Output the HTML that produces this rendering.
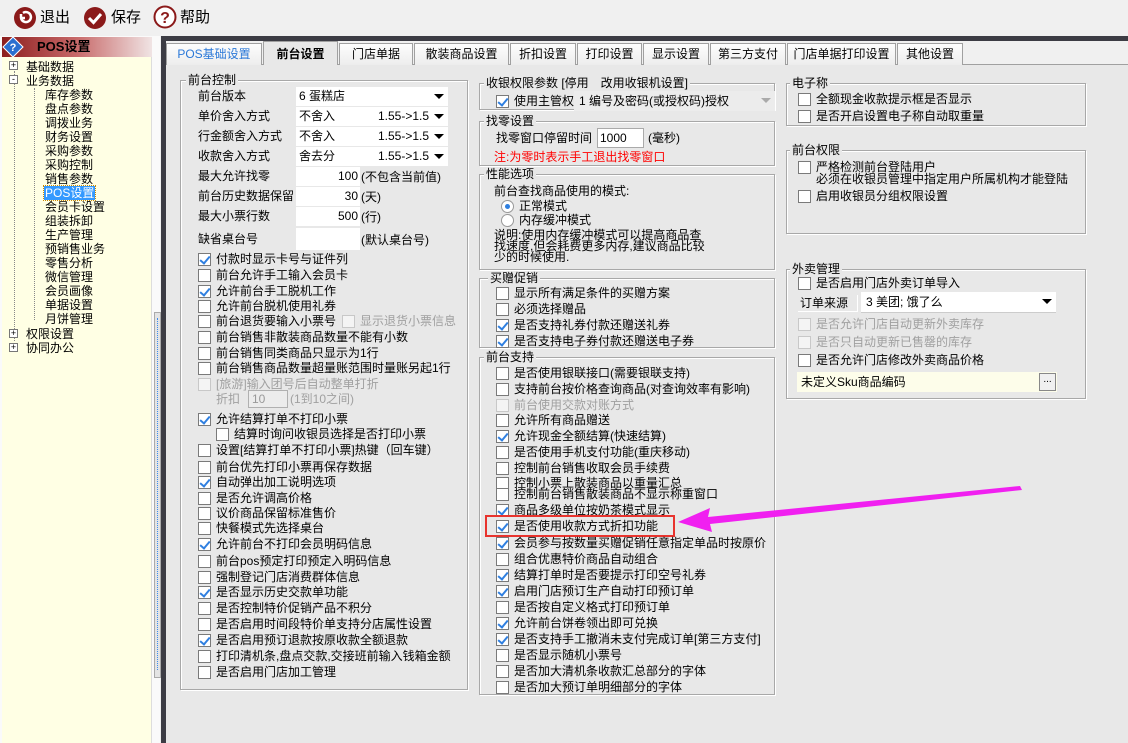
<!DOCTYPE html>
<html><head><meta charset="utf-8"><style>
*{margin:0;padding:0;box-sizing:border-box}
body{width:1128px;height:743px;overflow:hidden;background:#f0f0f0;position:relative;font:12px/14px "Liberation Sans","Noto Sans CJK SC",sans-serif;color:#000}
div,span{position:absolute;white-space:nowrap}
.r{display:flex;align-items:center;height:14px}
.c{display:inline-block;width:13px;height:13px;border:1px solid #7a7a7a;background:#fff;margin-right:5px;position:relative;flex:none}
.k::after{content:"";position:absolute;left:3px;top:0px;width:4px;height:8px;border-right:2px solid #2f7fe0;border-bottom:2px solid #2f7fe0;transform:rotate(40deg)}
.g{color:#a0a0a0}.g .c{border-color:#c8c8c8;background:#f4f4f4}
.grp{border:1px solid #a8a8a8;box-shadow:inset 1px 1px #fff,1px 1px #fff}
.lg{background:#e8e8e8;padding:0 2px;line-height:14px}
.tab{top:43px;height:22px;background:linear-gradient(#fdfdfd,#ededed);border:1px solid #a0a0a0;border-bottom:none;text-align:center;line-height:20px;font-size:12px}
.fl{left:196px;width:97px;height:19px;line-height:19px;padding-left:2px}
.fv{left:296px;width:152px;height:19px;background:#fff;line-height:19px;padding-left:3px}
.ar{position:absolute;right:4px;top:7px;border-left:5px solid transparent;border-right:5px solid transparent;border-top:5px solid #000}
</style></head><body>
<svg style="position:absolute;left:13px;top:6px" width="24" height="24"><circle cx="12" cy="12" r="11" fill="#8b1a1a"/><path d="M8 8 L8 12 M7 12 L12 12 M8 12 A5 5 0 1 0 10 7" stroke="#fff" stroke-width="2.5" fill="none"/></svg>
<div style="left:40px;top:9px;font-size:15px;line-height:18px">退出</div>
<svg style="position:absolute;left:83px;top:6px" width="24" height="24"><circle cx="12" cy="12" r="11" fill="#8b1a1a"/><path d="M6 12 L10.5 16.5 L18 8" stroke="#fff" stroke-width="3" fill="none"/></svg>
<div style="left:111px;top:9px;font-size:15px;line-height:18px">保存</div>
<svg style="position:absolute;left:153px;top:5px" width="24" height="26"><circle cx="12" cy="12" r="10.5" fill="#fff" stroke="#8b1a1a" stroke-width="2"/><text x="12" y="18" text-anchor="middle" font-size="16" font-weight="bold" fill="#8b1a1a" font-family="Liberation Sans">?</text></svg>
<div style="left:180px;top:9px;font-size:15px;line-height:18px">帮助</div>
<div style="left:0;top:36px;width:160px;height:707px;background:#fafafa"></div>
<div style="left:2px;top:37px;width:150px;height:20px;background:linear-gradient(90deg,#8c1e1e,#c86a6a 50%,#f0e4e4)"></div>
<svg style="position:absolute;left:2px;top:36px" width="22" height="22"><path d="M11 1 L21 11 L11 21 L1 11Z" fill="#2a6fd0" stroke="#fff"/><text x="11" y="15" text-anchor="middle" font-size="11" fill="#fff" font-weight="bold">?</text></svg>
<div style="left:37px;top:40px;font-weight:bold;font-size:13px">POS设置</div>
<div style="left:2px;top:57px;width:150px;height:686px;background:#ffffe4;border-right:1px solid #ddd"></div>
<div style="left:14px;top:71px;height:270px;border-left:1px dotted #888"></div>
<div style="left:34px;top:88px;height:232px;border-left:1px dotted #888"></div>
<div style="left:9px;top:61px;width:9px;height:9px;border:1px solid #777;background:#fff;font-size:9px;line-height:7px;text-align:center">+</div>
<div style="left:26px;top:60px">基础数据</div>
<div style="left:9px;top:75px;width:9px;height:9px;border:1px solid #777;background:#fff;font-size:9px;line-height:6px;text-align:center">-</div>
<div style="left:26px;top:74px">业务数据</div>
<div style="left:45px;top:88px">库存参数</div><div style="left:45px;top:102px">盘点参数</div><div style="left:45px;top:116px">调拨业务</div><div style="left:45px;top:130px">财务设置</div><div style="left:45px;top:144px">采购参数</div><div style="left:45px;top:158px">采购控制</div><div style="left:45px;top:172px">销售参数</div>
<div style="left:44px;top:186px;background:#3399ff;color:#fff;outline:1px dotted #c80;padding:0 1px">POS设置</div>
<div style="left:45px;top:200px">会员卡设置</div><div style="left:45px;top:214px">组装拆卸</div><div style="left:45px;top:228px">生产管理</div><div style="left:45px;top:242px">预销售业务</div><div style="left:45px;top:256px">零售分析</div><div style="left:45px;top:270px">微信管理</div><div style="left:45px;top:284px">会员画像</div><div style="left:45px;top:298px">单据设置</div><div style="left:45px;top:312px">月饼管理</div>
<div style="left:9px;top:329px;width:9px;height:9px;border:1px solid #777;background:#fff;font-size:9px;line-height:7px;text-align:center">+</div>
<div style="left:26px;top:327px">权限设置</div>
<div style="left:9px;top:343px;width:9px;height:9px;border:1px solid #777;background:#fff;font-size:9px;line-height:7px;text-align:center">+</div>
<div style="left:26px;top:341px">协同办公</div>
<div style="left:154px;top:312px;width:7px;height:366px;background:#e4e4e4;border:1px solid #aaa"></div>
<div style="left:157px;top:318px;height:352px;border-left:1px dotted #3b8cf0"></div>
<div style="left:161px;top:36px;width:967px;height:707px;background:#3c3c44"></div>
<div style="left:166px;top:41px;width:962px;height:702px;background:#f0f0f0"></div>
<div style="left:166px;top:64px;width:962px;height:679px;background:#e8e8e8;border-top:1px solid #a0a0a0"></div>
<div class="tab" style="left:166px;width:96px;color:#2a78d8">POS基础设置</div>
<div class="tab" style="left:263px;width:75px;top:41px;height:24px;background:#e8e8e8;font-weight:bold;line-height:24px">前台设置</div>
<div class="tab" style="left:339px;width:74px">门店单据</div>
<div class="tab" style="left:414px;width:95px">散装商品设置</div>
<div class="tab" style="left:510px;width:66px">折扣设置</div>
<div class="tab" style="left:577px;width:65px">打印设置</div>
<div class="tab" style="left:643px;width:66px">显示设置</div>
<div class="tab" style="left:710px;width:76px">第三方支付</div>
<div class="tab" style="left:787px;width:109px">门店单据打印设置</div>
<div class="tab" style="left:897px;width:66px">其他设置</div>
<div class="grp" style="left:180px;top:80px;width:288px;height:610px"></div>
<div class="lg" style="left:186px;top:73px">前台控制</div>
<div class="fl" style="top:87px">前台版本</div><div class="fv" style="top:87px">6 蛋糕店<i class="ar"></i></div>
<div class="fl" style="top:107px">单价舍入方式</div><div class="fv" style="top:107px">不舍入<span style="left:82px">1.55-&gt;1.5</span><i class="ar"></i></div>
<div class="fl" style="top:127px">行金额舍入方式</div><div class="fv" style="top:127px">不舍入<span style="left:82px">1.55-&gt;1.5</span><i class="ar"></i></div>
<div class="fl" style="top:147px">收款舍入方式</div><div class="fv" style="top:147px">舍去分<span style="left:82px">1.55-&gt;1.5</span><i class="ar"></i></div>
<div class="fl" style="top:167px">最大允许找零</div><div class="fv" style="top:167px;width:64px;text-align:right;padding-right:2px">100</div><div style="left:361px;top:170px">(不包含当前值)</div>
<div class="fl" style="top:187px">前台历史数据保留</div><div class="fv" style="top:187px;width:64px;text-align:right;padding-right:2px">30</div><div style="left:361px;top:190px">(天)</div>
<div class="fl" style="top:207px">最大小票行数</div><div class="fv" style="top:207px;width:64px;text-align:right;padding-right:2px">500</div><div style="left:361px;top:210px">(行)</div>
<div class="fl" style="top:228px;height:22px;line-height:22px">缺省桌台号</div><div class="fv" style="top:228px;width:64px;height:22px"></div><div style="left:361px;top:233px">(默认桌台号)</div>
<div class="r" style="left:198px;top:252px"><i class="c k"></i>付款时显示卡号与证件列</div>
<div class="r" style="left:198px;top:268px"><i class="c"></i>前台允许手工输入会员卡</div>
<div class="r" style="left:198px;top:284px"><i class="c k"></i>允许前台手工脱机工作</div>
<div class="r" style="left:198px;top:299px"><i class="c"></i>允许前台脱机使用礼券</div>
<div class="r" style="left:198px;top:314px"><i class="c"></i>前台退货要输入小票号</div>
<div class="r g" style="left:342px;top:314px"><i class="c"></i>显示退货小票信息</div>
<div class="r" style="left:198px;top:330px"><i class="c"></i>前台销售非散装商品数量不能有小数</div>
<div class="r" style="left:198px;top:346px"><i class="c"></i>前台销售同类商品只显示为1行</div>
<div class="r" style="left:198px;top:361px"><i class="c"></i>前台销售商品数量超量账范围时量账另起1行</div>
<div class="r g" style="left:198px;top:377px"><i class="c"></i>[旅游]输入团号后自动整单打折</div>
<div class="g" style="left:216px;top:392px">折扣</div>
<div style="left:248px;top:390px;width:40px;height:18px;border:1px solid #b0b0b0;background:#ececec;color:#999;padding-left:3px;line-height:16px">10</div>
<div class="g" style="left:290px;top:392px">(1到10之间)</div>
<div class="r" style="left:198px;top:412px"><i class="c k"></i>允许结算打单不打印小票</div>
<div class="r" style="left:216px;top:427px"><i class="c"></i>结算时询问收银员选择是否打印小票</div>
<div class="r" style="left:198px;top:443px"><i class="c"></i>设置[结算打单不打印小票]热键（回车键）</div>
<div class="r" style="left:198px;top:460px"><i class="c"></i>前台优先打印小票再保存数据</div>
<div class="r" style="left:198px;top:475px"><i class="c k"></i>自动弹出加工说明选项</div>
<div class="r" style="left:198px;top:491px"><i class="c"></i>是否允许调高价格</div>
<div class="r" style="left:198px;top:506px"><i class="c"></i>议价商品保留标准售价</div>
<div class="r" style="left:198px;top:521px"><i class="c"></i>快餐模式先选择桌台</div>
<div class="r" style="left:198px;top:537px"><i class="c k"></i>允许前台不打印会员明码信息</div>
<div class="r" style="left:198px;top:554px"><i class="c"></i>前台pos预定打印预定入明码信息</div>
<div class="r" style="left:198px;top:570px"><i class="c"></i>强制登记门店消费群体信息</div>
<div class="r" style="left:198px;top:585px"><i class="c k"></i>是否显示历史交款单功能</div>
<div class="r" style="left:198px;top:601px"><i class="c"></i>是否控制特价促销产品不积分</div>
<div class="r" style="left:198px;top:617px"><i class="c"></i>是否启用时间段特价单支持分店属性设置</div>
<div class="r" style="left:198px;top:633px"><i class="c k"></i>是否启用预订退款按原收款全额退款</div>
<div class="r" style="left:198px;top:649px"><i class="c"></i>打印清机条,盘点交款,交接班前输入钱箱金额</div>
<div class="r" style="left:198px;top:665px"><i class="c"></i>是否启用门店加工管理</div>
<div class="grp" style="left:479px;top:83px;width:296px;height:27px"></div>
<div class="lg" style="left:484px;top:76px">收银权限参数 [停用　改用收银机设置]</div>
<div class="r" style="left:496px;top:94px"><i class="c k"></i>使用主管权限</div>
<div style="left:574px;top:91px;width:201px;height:20px;background:#ececec;padding-left:5px;line-height:20px">1 编号及密码(或授权码)授权<i class="ar" style="border-top-color:#aaa"></i></div>
<div class="grp" style="left:479px;top:121px;width:296px;height:45px"></div>
<div class="lg" style="left:484px;top:114px">找零设置</div>
<div style="left:496px;top:131px">找零窗口停留时间</div>
<div style="left:597px;top:128px;width:47px;height:20px;background:#fff;border:1px solid #aaa;line-height:18px;padding-left:2px">1000</div>
<div style="left:648px;top:131px">(毫秒)</div>
<div style="left:494px;top:150px;color:#f00">注:为零时表示手工退出找零窗口</div>
<div class="grp" style="left:479px;top:174px;width:296px;height:96px"></div>
<div class="lg" style="left:484px;top:167px">性能选项</div>
<div style="left:494px;top:184px">前台查找商品使用的模式:</div>
<div class="r" style="left:501px;top:199px"><i class="c" style="border-radius:50%;border-color:#999"><i style="position:absolute;left:3px;top:3px;width:5px;height:5px;border-radius:50%;background:#2f7fe0"></i></i>正常模式</div>
<div class="r" style="left:501px;top:213px"><i class="c" style="border-radius:50%;border-color:#999"></i>内存缓冲模式</div>
<div style="left:494px;top:230px;line-height:11px">说明:使用内存缓冲模式可以提高商品查<br>找速度,但会耗费更多内存,建议商品比较<br>少的时候使用.</div>
<div class="grp" style="left:479px;top:278px;width:296px;height:70px"></div>
<div class="lg" style="left:488px;top:271px">买赠促销</div>
<div class="r" style="left:496px;top:286px"><i class="c"></i>显示所有满足条件的买赠方案</div>
<div class="r" style="left:496px;top:302px"><i class="c"></i>必须选择赠品</div>
<div class="r" style="left:496px;top:318px"><i class="c k"></i>是否支持礼券付款还赠送礼券</div>
<div class="r" style="left:496px;top:334px"><i class="c k"></i>是否支持电子券付款还赠送电子券</div>
<div class="grp" style="left:479px;top:357px;width:296px;height:338px"></div>
<div class="lg" style="left:484px;top:350px">前台支持</div>
<div class="r" style="left:496px;top:366px"><i class="c"></i>是否使用银联接口(需要银联支持)</div>
<div class="r" style="left:496px;top:382px"><i class="c"></i>支持前台按价格查询商品(对查询效率有影响)</div>
<div class="r g" style="left:496px;top:398px"><i class="c"></i>前台使用交款对账方式</div>
<div class="r" style="left:496px;top:413px"><i class="c"></i>允许所有商品赠送</div>
<div class="r" style="left:496px;top:429px"><i class="c k"></i>允许现金全额结算(快速结算)</div>
<div class="r" style="left:496px;top:445px"><i class="c"></i>是否使用手机支付功能(重庆移动)</div>
<div class="r" style="left:496px;top:461px"><i class="c"></i>控制前台销售收取会员手续费</div>
<div class="r" style="left:496px;top:476px"><i class="c"></i>控制小票上散装商品以重量汇总</div>
<div class="r" style="left:496px;top:487px"><i class="c"></i>控制前台销售散装商品不显示称重窗口</div>
<div class="r" style="left:496px;top:503px"><i class="c k"></i>商品多级单位按奶茶模式显示</div>
<div class="r" style="left:496px;top:519px"><i class="c k"></i>是否使用收款方式折扣功能</div>
<div style="left:485px;top:515px;width:190px;height:22px;border:2px solid #e8342e"></div>
<div class="r" style="left:496px;top:536px"><i class="c k"></i>会员参与按数量买赠促销任意指定单品时按原价</div>
<div class="r" style="left:496px;top:552px"><i class="c"></i>组合优惠特价商品自动组合</div>
<div class="r" style="left:496px;top:568px"><i class="c k"></i>结算打单时是否要提示打印空号礼券</div>
<div class="r" style="left:496px;top:584px"><i class="c k"></i>启用门店预订生产自动打印预订单</div>
<div class="r" style="left:496px;top:600px"><i class="c"></i>是否按自定义格式打印预订单</div>
<div class="r" style="left:496px;top:616px"><i class="c k"></i>允许前台饼卷领出即可兑换</div>
<div class="r" style="left:496px;top:632px"><i class="c k"></i>是否支持手工撤消未支付完成订单[第三方支付]</div>
<div class="r" style="left:496px;top:648px"><i class="c"></i>是否显示随机小票号</div>
<div class="r" style="left:496px;top:664px"><i class="c"></i>是否加大清机条收款汇总部分的字体</div>
<div class="r" style="left:496px;top:680px"><i class="c"></i>是否加大预订单明细部分的字体</div>
<div class="grp" style="left:786px;top:83px;width:300px;height:43px"></div>
<div class="lg" style="left:790px;top:76px">电子称</div>
<div class="r" style="left:798px;top:92px"><i class="c"></i>全额现金收款提示框是否显示</div>
<div class="r" style="left:798px;top:109px"><i class="c"></i>是否开启设置电子称自动取重量</div>
<div class="grp" style="left:786px;top:150px;width:300px;height:84px"></div>
<div class="lg" style="left:790px;top:143px">前台权限</div>
<div class="r" style="left:798px;top:161px;align-items:flex-start;height:28px"><i class="c"></i><span style="position:static;line-height:12px">严格检测前台登陆用户<br>必须在收银员管理中指定用户所属机构才能登陆</span></div>
<div class="r" style="left:798px;top:189px"><i class="c"></i>启用收银员分组权限设置</div>
<div class="grp" style="left:786px;top:269px;width:300px;height:130px"></div>
<div class="lg" style="left:790px;top:262px">外卖管理</div>
<div class="r" style="left:798px;top:276px"><i class="c"></i>是否启用门店外卖订单导入</div>
<div style="left:798px;top:295px;width:60px;line-height:16px;padding-left:2px;border-bottom:1px solid #fff;border-right:1px solid #fff">订单来源</div>
<div style="left:861px;top:292px;width:195px;height:21px;background:#fff;padding-left:5px;line-height:21px;border-bottom:1px solid #ccc">3 美团; 饿了么<i class="ar"></i></div>
<div class="r g" style="left:798px;top:317px"><i class="c"></i>是否允许门店自动更新外卖库存</div>
<div class="r g" style="left:798px;top:335px"><i class="c"></i>是否只自动更新已售罄的库存</div>
<div class="r" style="left:798px;top:353px"><i class="c"></i>是否允许门店修改外卖商品价格</div>
<div style="left:797px;top:372px;width:260px;height:20px;background:#fdfdea;line-height:20px;padding-left:4px">未定义Sku商品编码</div>
<div style="left:1039px;top:373px;width:17px;height:18px;background:#f0f0f0;border:1px solid #888;line-height:12px;text-align:center;font-size:10px">...</div>
<svg style="position:absolute;left:670px;top:480px" width="360" height="56"><polygon points="8,42 40,28 38,37 350,6 352,10 40,44 42,52" fill="#f020f0"/></svg>
</body></html>
